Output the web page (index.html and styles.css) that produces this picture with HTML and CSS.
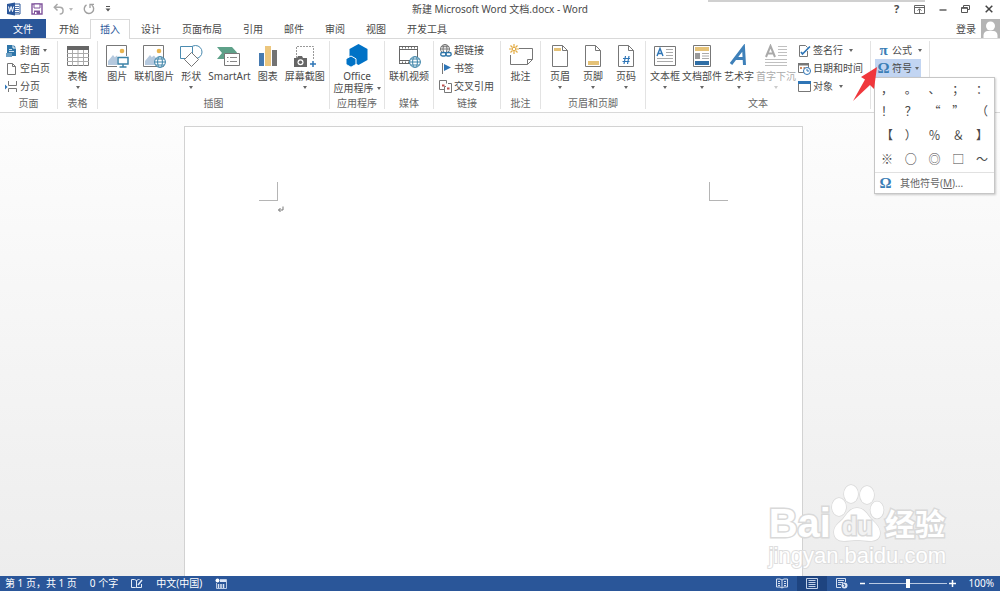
FILE: index.html
```html
<!DOCTYPE html>
<html lang="zh-CN">
<head>
    <meta charset="UTF-8">
    <meta name="viewport" content="width=device-width, initial-scale=1.0">
    <title>新建 Microsoft Word 文档.docx - Word</title>
    <link rel="stylesheet" href="styles.css">
</head>
<body>
    <header class="title-bar">
        <div class="quick-access">
            <svg class="word-logo" width="14" height="14" viewBox="0 0 14 14"><path d="M7 2h6v10H7z" fill="#fff" stroke="#2b579a"/><path d="M8 4.5h4M8 6.5h4M8 8.5h4M8 10.5h4" stroke="#2b579a" stroke-width=".8"/><path d="M0 2l8-1.500v13L0 12z" fill="#2b579a"/><path d="M1.500 4.500l1.200 5 1.400-5 1.400 5 1.200-5" fill="none" stroke="#fff"/></svg>
            <button aria-label="保存"><svg width="12" height="12" viewBox="0 0 12 12"><path d="M1 1h10v10H1z" fill="#fff" stroke="#80549c" stroke-width="1.400"/><path d="M3 1h6v4H3z" fill="#fff" stroke="#80549c"/><path d="M3 7.500h6V11H3z" fill="#80549c"/><path d="M4 9h1.500v2H4z" fill="#fff"/></svg></button>
            <button class="undo" aria-label="撤消"><svg width="12" height="12" viewBox="0 0 12 12"><path d="M4.500 1L1.300 4.300l3.200 3.200M1.500 4.300h5.200a3.300 3.300 0 0 1 0 6.700" fill="none" stroke="#a9a9a9" stroke-width="1.500"/></svg><i class="caret pale"></i></button>
            <button aria-label="恢复"><svg width="12" height="12" viewBox="0 0 12 12"><path d="M3.500 1.800a4.700 4.700 0 1 0 5.200.2" fill="none" stroke="#a0a0a0" stroke-width="1.400"/><path d="M7 5V1.300h4" fill="none" stroke="#a0a0a0" stroke-width="1.300"/></svg></button>
            <button aria-label="自定义快速访问工具栏"><svg width="6" height="6" viewBox="0 0 6 6"><path d="M1 .5h4" stroke="#555"/><path d="M.5 2.500h5L3 5.500z" fill="#555"/></svg></button>
        </div>
        <h1 class="doc-title">新建 Microsoft Word 文档.docx - Word</h1>
        <div class="window-buttons">
            <button class="help">?</button>
            <button aria-label="功能区显示选项"><svg width="11" height="9" viewBox="0 0 11 9"><path d="M.5.5h10v8H.5zM.5 2.500h10M5.500 8V4M3.500 5.700l2-2 2 2" fill="none" stroke="#666"/></svg></button>
            <button aria-label="最小化"><svg width="8" height="8" viewBox="0 0 8 8"><path d="M.5 5h7" stroke="#555" stroke-width="1.400"/></svg></button>
            <button aria-label="向下还原"><svg width="9" height="8" viewBox="0 0 9 8"><path d="M2.500 2.500v-2h6v4h-2M.5 2.500h6v5h-6zM.5 3.300h6" fill="none" stroke="#555"/></svg></button>
            <button aria-label="关闭"><svg width="8" height="8" viewBox="0 0 8 8"><path d="M.7.7l6.600 6.600M7.300.7L.7 7.300" stroke="#444" stroke-width="1.500"/></svg></button>
        </div>
        <span class="window-edge"></span>
    </header>

    <nav class="tabs">
        <button class="tab file">文件</button>
        <button class="tab">开始</button>
        <button class="tab active">插入</button>
        <button class="tab">设计</button>
        <button class="tab">页面布局</button>
        <button class="tab">引用</button>
        <button class="tab">邮件</button>
        <button class="tab">审阅</button>
        <button class="tab">视图</button>
        <button class="tab">开发工具</button>
        <div class="account">
            <a href="#">登录</a>
            <svg width="19" height="19" viewBox="0 0 19 19"><path d="M0 0h19v19H0z" fill="#b4b4b4"/><circle cx="9.500" cy="7" r="4.500" fill="#fff"/><path d="M2.500 19v-2.500c0-3 2-4.500 4-4.500h6c2 0 4 1.500 4 4.500V19z" fill="#fff"/></svg>
        </div>
    </nav>

    <section class="ribbon">
        <div class="group g-page">
            <div class="stack">
                <button class="small"><svg width="13" height="13" viewBox="0 0 13 13"><path d="M2 1h6.500L11 3.500V12H2z" fill="#2e75a8"/><path d="M8 1v3h3" fill="none" stroke="#fff"/><path d="M4 5.500h3M4 7.500h5" stroke="#cfe2f0"/><path d="M1 9h6v4H1z" fill="#6da0c4"/></svg>封面<i class="caret"></i></button>
                <button class="small"><svg width="13" height="13" viewBox="0 0 13 13"><path d="M2.500 1.500h5l3 3v8h-8zM7.500 1.500v3h3" fill="#fff" stroke="#777"/></svg>空白页</button>
                <button class="small"><svg width="13" height="13" viewBox="0 0 13 13"><path d="M3.500 1v4.500h8V1M3.500 12V8.500h8V12" fill="none" stroke="#777"/><path d="M0 4.500L2.500 7 0 9.500z" fill="#2e75b6"/></svg>分页</button>
            </div>
            <span class="group-name">页面</span>
        </div>

        <div class="group g-table">
            <div class="items">
                <button class="large"><svg width="24" height="24" viewBox="0 0 24 24"><path d="M1.500 2.500h21v19h-21z" fill="#fff" stroke="#777"/><path d="M1 2h22v4H1z" fill="#666"/><path d="M1 9.500h22M1 13.500h22M1 17.500h22M6.500 6v16M12 6v16M17.500 6v16" stroke="#aaa"/></svg>表格<i class="caret"></i></button>
            </div>
            <span class="group-name">表格</span>
        </div>

        <div class="group g-art">
            <div class="items">
                <button class="large"><svg width="24" height="24" viewBox="0 0 24 24"><path d="M1.500 1.500h20v21h-20z" fill="#fff" stroke="#777"/><circle cx="17" cy="7" r="2.300" fill="#e8b44f"/><path d="M3 21v-4l5-6 4 5v5zM10 13l2-1.500 2 2.500v7h-4z" fill="#b5c9de"/><path d="M12 12h12v11H12z" fill="#fff"/><path d="M13 13.500h10v6.500H13z" fill="#fff" stroke="#3c83a8" stroke-width="1.500"/><path d="M18 20v3M14.500 23h7" stroke="#3c83a8" stroke-width="1.500"/></svg>图片</button>
                <button class="large"><svg width="24" height="24" viewBox="0 0 24 24"><path d="M1.500 1.500h20v21h-20z" fill="#fff" stroke="#777"/><circle cx="17" cy="7" r="2.300" fill="#e8b44f"/><path d="M3 21v-4l5-6 4 5v5zM10 13l2-1.500 2 2.500v7h-4z" fill="#b5c9de"/><g fill="#fff" stroke="#3c83a8"><circle cx="18" cy="18" r="5.400"/><ellipse cx="18" cy="18" rx="2.400" ry="5.400"/><path d="M12.500 18h11M13.500 15h9M13.500 21h9"/></g></svg>联机图片</button>
                <button class="large"><svg width="24" height="24" viewBox="0 0 24 24"><circle cx="16.500" cy="8" r="6.500" fill="#fff" stroke="#4b8bb0"/><path d="M1.500 2.500h12v12h-12z" fill="#fff" stroke="#4b8bb0"/><path d="M12.500 8.500l7 7-7 7-7-7z" fill="#fff" stroke="#777"/></svg>形状<i class="caret"></i></button>
                <button class="large"><svg width="24" height="24" viewBox="0 0 24 24"><path d="M0 3h15l5 5.500L15 15H0l5-6z" fill="#5ea189"/><path d="M7.500 9.500h15v12h-15z" fill="#fff" stroke="#777"/><path d="M10 13.500h1.500M13 13.500h7M10 17.500h1.500M13 17.500h7" stroke="#888"/></svg>SmartArt</button>
                <button class="large"><svg width="24" height="24" viewBox="0 0 24 24"><path d="M3 9h5v13H3z" fill="#467ab0"/><path d="M9 2h6v20H9z" fill="#ecc67d"/><path d="M16 6h5v16h-5z" fill="#737373"/></svg>图表</button>
                <button class="large"><svg width="24" height="24" viewBox="0 0 24 24"><path d="M3.500 14V2.500h17V16" fill="none" stroke="#999" stroke-dasharray="2 1"/><path d="M1 14h3l1-2h4l1 2h4v9H1z" fill="#666"/><circle cx="7.500" cy="18.300" r="3" fill="#fff"/><circle cx="7.500" cy="18.300" r="1.700" fill="#666"/><path d="M20 17v6M17 20h6" stroke="#2e75b6" stroke-width="1.500"/></svg>屏幕截图<i class="caret"></i></button>
            </div>
            <span class="group-name">插图</span>
        </div>

        <div class="group g-apps">
            <div class="items">
                <button class="large"><svg width="24" height="24" viewBox="0 0 24 24"><path d="M13.500 0l9 5v11l-9 5-9-5V5z" fill="#0072c6"/><path d="M6 12l5 2.800v5.600L6 23.200l-5-2.800v-5.600z" fill="#0072c6" stroke="#fff"/></svg>Office<span class="second-line">应用程序<i class="caret"></i></span></button>
            </div>
            <span class="group-name">应用程序</span>
        </div>

        <div class="group g-media">
            <div class="items">
                <button class="large"><svg width="24" height="24" viewBox="0 0 24 24"><path d="M2.500 2v18M20.500 2v18M2 5.500h19M2 16.500h19" fill="none" stroke="#666"/><path d="M2 3.500h19M2 18.500h19" stroke="#777" stroke-width="2" stroke-dasharray="1 2"/><path d="M2 2.500h19M2 19.500h19" stroke="#666"/><g fill="#fff" stroke="#3c83a8"><circle cx="18" cy="18" r="5.400"/><ellipse cx="18" cy="18" rx="2.400" ry="5.400"/><path d="M12.500 18h11M13.500 15h9M13.500 21h9"/></g></svg>联机视频</button>
            </div>
            <span class="group-name">媒体</span>
        </div>

        <div class="group g-links">
            <div class="stack">
                <button class="small"><svg width="13" height="13" viewBox="0 0 13 13"><g fill="none" stroke="#777"><circle cx="6" cy="5" r="4.500"/><ellipse cx="6" cy="5" rx="2" ry="4.500"/><path d="M1.500 5h9M2 2.700h8"/></g><path d="M1 8h12v5H1z" fill="#fff"/><rect x="1.700" y="8.500" width="5.500" height="3.500" rx="1.700" fill="none" stroke="#2e75a8" stroke-width="1.400"/><rect x="6.700" y="8.500" width="5.500" height="3.500" rx="1.700" fill="none" stroke="#2e75a8" stroke-width="1.400"/></svg>超链接</button>
                <button class="small"><svg width="13" height="13" viewBox="0 0 13 13"><path d="M3.500 1v11" stroke="#777"/><path d="M5 2l7 3.500L5 9z" fill="#2e75b6"/></svg>书签</button>
                <button class="small"><svg width="13" height="13" viewBox="0 0 13 13"><path d="M5.500 9.500h-5v-9h7v3M9 3.500h3.500v9h-7v-6H7" fill="none" stroke="#777"/><path d="M3 5.500h2.500M8 8.500h2.500" stroke="#c0504d" stroke-width="1.800"/></svg>交叉引用</button>
            </div>
            <span class="group-name">链接</span>
        </div>

        <div class="group g-comment">
            <div class="items">
                <button class="large"><svg width="24" height="24" viewBox="0 0 24 24"><path d="M10 4.500h13.500v11l-5 5H1.500V11M23.500 15.500h-5v5" fill="none" stroke="#777"/><path d="M5 0v3M5 7v3M0 5h3M7 5h3M1.500 1.500l2 2M6.500 6.500l2 2M8.500 1.500l-2 2M3.500 6.500l-2 2" stroke="#e3ac45" stroke-width="1.200"/><circle cx="5" cy="5" r="1.700" fill="#fff" stroke="#e3ac45"/></svg>批注</button>
            </div>
            <span class="group-name">批注</span>
        </div>

        <div class="group g-header">
            <div class="items">
                <button class="large"><svg width="24" height="24" viewBox="0 0 24 24"><path d="M4.500 1.500h10l5 5v16h-15zM14.500 1.500v5h5" fill="#fff" stroke="#777"/><path d="M6 4h7v3H6z" fill="#e5c277"/></svg>页眉<i class="caret"></i></button>
                <button class="large"><svg width="24" height="24" viewBox="0 0 24 24"><path d="M4.500 1.500h10l5 5v16h-15zM14.500 1.500v5h5" fill="#fff" stroke="#777"/><path d="M7 17h11v4H7z" fill="#e5c277"/></svg>页脚<i class="caret"></i></button>
                <button class="large"><svg width="24" height="24" viewBox="0 0 24 24"><path d="M4.500 1.500h10l5 5v16h-15zM14.500 1.500v5h5" fill="#fff" stroke="#777"/><path d="M11.500 12l-1.500 8M15 12l-1.500 8M9 14.500h7M8.500 17.500h7" stroke="#2e75b6" stroke-width="1.200"/></svg>页码<i class="caret"></i></button>
            </div>
            <span class="group-name">页眉和页脚</span>
        </div>

        <div class="group g-text">
            <div class="items">
                <button class="large"><svg width="24" height="24" viewBox="0 0 24 24"><path d="M1.500 2.500h21v19h-21z" fill="#fff" stroke="#777"/><path d="M4 12l3-7.500 3 7.500M5 9.500h4" fill="none" stroke="#2e75b6" stroke-width="1.400"/><path d="M13 5.500h7M13 8.500h7M13 11.500h7M4 14.500h16M4 17.500h16" stroke="#aaa"/></svg>文本框<i class="caret"></i></button>
                <button class="large"><svg width="24" height="24" viewBox="0 0 24 24"><path d="M3.500 1.500h17v21h-17z" fill="#fff" stroke="#777"/><path d="M5 3h14v4H5z" fill="#e5c277"/><path d="M5 9h5v6H5z" fill="#999"/><path d="M12 9.500h7M12 12h7M12 14.500h7" stroke="#aaa"/><path d="M5 17h14v4H5z" fill="#2f6ea5"/></svg>文档部件<i class="caret"></i></button>
                <button class="large"><svg width="24" height="24" viewBox="0 0 24 24"><path d="M4 20L16.500 3.500 17.500 21M8 14.500h9" fill="none" stroke="#3e80b9" stroke-width="3"/></svg>艺术字<i class="caret"></i></button>
                <button class="large" disabled><svg width="24" height="24" viewBox="0 0 24 24"><path d="M2 13l4.500-11L11 13M3.500 9.500h6" fill="none" stroke="#aaa" stroke-width="2"/><path d="M14 2.500h9M14 5.500h9M14 8.500h9M14 11.500h9M1 15.500h22M1 18.500h22M1 21.500h22" stroke="#c0c0c0"/></svg>首字下沉<i class="caret"></i></button>
                <div class="stack">
                    <button class="small spaced"><svg width="13" height="13" viewBox="0 0 13 13"><path d="M9.500 7v5.500h-8v-11h6l2 2" fill="none" stroke="#777"/><path d="M3 8l1.500 2L12 2.500" fill="none" stroke="#2e75b6" stroke-width="1.700"/></svg>签名行<i class="caret"></i></button>
                    <button class="small"><svg width="13" height="13" viewBox="0 0 13 13"><path d="M.5 1.500h10v9H.5z" fill="#fff" stroke="#777"/><path d="M0 1h11v2.500H0z" fill="#777"/><path d="M2 5h2v2H2zM5.500 5h2v2h-2z" fill="#d38a5c"/><circle cx="9" cy="9" r="3.500" fill="#fff" stroke="#2e75b6"/><path d="M9 7v2h2" fill="none" stroke="#2e75b6"/></svg>日期和时间</button>
                    <button class="small spaced"><svg width="13" height="13" viewBox="0 0 13 13"><path d="M.5 1.500h12v10H.5z" fill="#fff" stroke="#777"/><path d="M0 1h13v3H0z" fill="#2e75b6"/></svg>对象<i class="caret"></i></button>
                </div>
            </div>
            <span class="group-name">文本</span>
        </div>

        <div class="group g-symbol">
            <div class="stack">
                <button class="small spaced"><span class="greek">π</span>公式<i class="caret"></i></button>
                <div class="symbol-picker">
                    <button class="small open"><span class="greek">Ω</span>符号<i class="caret"></i></button>
                    <div class="symbol-menu">
                        <div class="symbol-grid">
                            <button>，</button><button>。</button><button>、</button><button>；</button><button>：</button>
                            <button>！</button><button>？</button><button>“</button><button>”</button><button>（</button>
                            <button>【</button><button>）</button><button>％</button><button>＆</button><button>】</button>
                            <button>※</button><button class="ring">○</button><button>◎</button><button>□</button><button>～</button>
                        </div>
                        <button class="more-symbols"><span class="greek">Ω</span><span>其他符号(<u>M</u>)...</span></button>
                    </div>
                    <svg class="pointer" width="26" height="36" viewBox="0 0 26 36"><path d="M25 1L9 11l4 2.500L1 35l17-16 4 4z" fill="#f0373c"/></svg>
                </div>
            </div>
        </div>
    </section>

    <main class="workspace">
        <article class="page">
            <div class="margin-marks">
                <span class="mark left"></span>
                <span class="mark right"></span>
            </div>
            <p class="paragraph"><svg width="7" height="7" viewBox="0 0 7 7"><path d="M6 .5v3.500H1.500M3.500 2L1.500 4l2 2" fill="none" stroke="#777"/></svg></p>
        </article>
        <div class="watermark">
            <div class="watermark-logo">
                <span class="latin">Bai</span>
                <span class="paw">
                    <svg width="54" height="60" viewBox="0 0 54 60"><g fill="#fff" stroke="#d9d9d9" stroke-width="1.500"><ellipse cx="8" cy="24" rx="7" ry="9"/><ellipse cx="20" cy="11" rx="7" ry="9"/><ellipse cx="36" cy="12" rx="7" ry="9"/><ellipse cx="46" cy="27" rx="6.500" ry="8.500"/><path d="M26 25c7 0 10 6 14 11 4 4 9 8 9 14 0 6-5 8-10 8-5 0-8-1-13-1s-8 1-13 1c-6 0-10-3-10-9 0-6 5-9 9-13 4-5 7-11 14-11z"/></g></svg>
                    <b>du</b>
                </span>
                <span class="hanzi">经验</span>
            </div>
            <div class="watermark-url">jingyan.baidu.com</div>
        </div>
    </main>

    <footer class="status-bar">
        <span class="pages">第 1 页，共 1 页</span>
        <span>0 个字</span>
        <svg width="12" height="11" viewBox="0 0 12 11"><path d="M5.500 9.500v-7l-2-1h-3v8h4zM5.500 9.500h5V6M5.500 2.500l2-1h1" fill="none" stroke="#e3ebf7"/><path d="M7 7l4-5" stroke="#e3ebf7" stroke-width="1.500"/></svg>
        <span>中文(中国)</span>
        <svg width="12" height="11" viewBox="0 0 12 11"><path d="M5 1.500h6.500v9h-10V5" fill="none" stroke="#b9c9e3"/><path d="M5 2h6v2H5z" fill="#dce6f5"/><path d="M3.500 6v4M6 6v4M8.500 6v4" stroke="#dce6f5" stroke-width="1.500"/><circle cx="2.500" cy="2.500" r="2" fill="#fff"/></svg>
        <div class="view-tools">
            <button aria-label="阅读视图"><svg width="12" height="11" viewBox="0 0 12 11"><path d="M6 2L4 1H.5v8H4l2 1 2-1h3.500V1H8zM6 2v8M2 3.500h2M2 5.500h2M2 7.500h2M8 3.500h2M8 5.500h2M8 7.500h2" fill="none" stroke="#d4dff0"/></svg></button>
            <button class="current" aria-label="页面视图"><svg width="12" height="11" viewBox="0 0 12 11"><path d="M.5.5h11v10H.5zM2.500 2.500h7M2.500 4.500h7M2.500 6.500h7M2.500 8.500h7" fill="none" stroke="#c3d1e8"/></svg></button>
            <button aria-label="Web 版式视图"><svg width="12" height="11" viewBox="0 0 12 11"><path d="M9.500 4V.5h-9v9H5M2 2.500h6M2 4.500h5M2 6.500h3" fill="none" stroke="#d4dff0"/><circle cx="8.500" cy="7.500" r="3" fill="#dbe5f4"/><path d="M7 6l2 1-1 2" fill="none" stroke="#2a5699"/></svg></button>
            <button class="zoom-step" aria-label="缩小"><svg width="7" height="7" viewBox="0 0 7 7"><path d="M1 3.500h5" stroke="#fff" stroke-width="1.500"/></svg></button>
            <input class="zoom" type="range" min="0" max="200" value="100" aria-label="显示比例">
            <button class="zoom-step" aria-label="放大"><svg width="7" height="7" viewBox="0 0 7 7"><path d="M0 3.500h7M3.500 0v7" stroke="#fff" stroke-width="1.500"/></svg></button>
            <span class="zoom-value">100%</span>
        </div>
    </footer>
</body>
</html>
```
FILE: styles.css
```css
:root {
    --blue: #2a5699;
    --text: #4a4a4a;
    --line: #d9d9d9;
    --icon-blue: #3a7db5;
}

* {
    box-sizing: border-box;
}

body {
    margin: 0;
    min-height: 100vh;
    display: flex;
    flex-direction: column;
    background: #fff;
    color: var(--text);
    font-family: "Noto Sans", "Noto Sans CJK SC", sans-serif;
    font-size: 10px;
    line-height: 14px;
}

button {
    font: inherit;
    color: inherit;
    background: none;
    border: 0;
    padding: 0;
    white-space: nowrap;
}

svg {
    display: block;
    flex: none;
}

.caret {
    flex: none;
    border: 2px solid transparent;
    border-top: 3px solid #666;
    border-bottom: 0;
}

.caret.pale {
    border-top-color: #bbb;
}

/* title bar */
.title-bar {
    position: relative;
    display: grid;
    grid-template-columns: 1fr auto 1fr;
    align-items: center;
    height: 18px;
}

.quick-access {
    display: flex;
    align-items: center;
    gap: 10px;
    padding-left: 7px;
}

.quick-access button {
    display: flex;
    align-items: center;
    gap: 4px;
}

.doc-title {
    margin: 0;
    font-size: 10px;
    font-weight: normal;
}

.window-buttons {
    display: flex;
    justify-content: flex-end;
}

.window-buttons button {
    width: 23px;
    height: 18px;
    display: flex;
    align-items: center;
    justify-content: center;
}

.window-buttons .help {
    font-size: 11px;
    font-weight: bold;
}

.window-edge {
    position: absolute;
    top: 0;
    right: 75px;
    width: 217px;
    height: 2px;
    background: #d0d0d0;
}

/* tabs */
.tabs {
    display: flex;
    gap: 1px;
    height: 21px;
    padding-top: 1px;
    border-bottom: 1px solid var(--line);
}

.tab {
    height: 19px;
    padding: 0 10px;
}

.tab.file {
    width: 46px;
    margin-right: 2px;
    background: var(--blue);
    color: #fff;
}

.tab.active {
    height: 20px;
    padding: 0 9px 2px;
    background: #fff;
    color: var(--blue);
    border: 1px solid var(--line);
    border-bottom: 0;
}

.account {
    display: flex;
    align-items: center;
    gap: 5px;
    margin-left: auto;
}

.account a {
    color: inherit;
    text-decoration: none;
}

/* ribbon */
.ribbon {
    display: grid;
    grid-template-columns: 58px 40px 232px 55px 49px 67px 40px 105px 225px 59px;
    height: 74px;
    border-bottom: 1px solid var(--line);
}

.group {
    display: flex;
    flex-direction: column;
    justify-content: space-between;
    margin: 2px 0 3px;
    border-right: 1px solid #e3e3e3;
}

.group-name {
    line-height: 12px;
    text-align: center;
    color: #666;
}

.items {
    display: flex;
    justify-content: center;
}

.g-art .items {
    gap: 5px;
    padding-left: 3px;
}

.g-header .items {
    gap: 9px;
}

.g-text .items {
    gap: 2px;
    padding-right: 3px;
}

.large {
    display: flex;
    flex-direction: column;
    align-items: center;
    padding-top: 3px;
}

.large svg {
    margin-bottom: 1px;
}

.large > .caret {
    margin-top: 3px;
}

.large:disabled {
    color: #aaa;
}

.large:disabled .caret {
    border-top-color: #ccc;
}

.second-line {
    display: flex;
    align-items: center;
    gap: 3px;
    line-height: 10px;
}

.stack {
    display: flex;
    flex-direction: column;
    align-items: flex-start;
}

.small {
    display: flex;
    align-items: center;
    gap: 2px;
    height: 18px;
}

.small .caret {
    margin-left: 1px;
}

.small.spaced .caret {
    margin-left: 4px;
}

.g-page .stack,
.g-links .stack {
    padding-left: 5px;
}

.g-symbol .stack {
    padding-left: 4px;
}

.g-symbol .small {
    padding: 0 2px;
}

.greek {
    width: 13px;
    font-family: "Liberation Serif", serif;
    font-size: 15px;
    font-weight: bold;
    text-align: center;
    color: var(--icon-blue);
}

/* symbol drop-down */
.symbol-picker {
    position: relative;
}

.symbol-picker .open {
    background: #c2d5f2;
}

.symbol-menu {
    position: absolute;
    z-index: 2;
    top: 18px;
    left: -1px;
    width: 121px;
    background: #fff;
    border: 1px solid #c6c6c6;
    box-shadow: 1px 1px 2px rgba(0, 0, 0, 0.2);
}

.symbol-grid {
    display: grid;
    grid-template-columns: repeat(5, 1fr);
    grid-template-rows: 20px repeat(3, 24px);
    padding: 1px 0;
    border-bottom: 1px solid #e1e1e1;
}

.symbol-grid button {
    font-family: "Noto Sans CJK SC", sans-serif;
    font-size: 12px;
}

.symbol-grid .ring {
    font-weight: bold;
}

.more-symbols {
    display: flex;
    align-items: center;
    gap: 8px;
    height: 20px;
    padding-left: 4px;
    color: #666;
}

.pointer {
    position: absolute;
    z-index: 3;
    top: 7px;
    left: -23px;
}

/* document */
.workspace {
    position: relative;
    flex: 1;
    display: flex;
    justify-content: center;
    padding: 13px 14px 0 0;
    background: linear-gradient(#fdfdfd, #ededed);
}

.page {
    width: 619px;
    max-width: 90%;
    padding: 55px 74px 0;
    background: #fff;
    border: 1px solid #d2d2d2;
    border-bottom: 0;
}

.margin-marks {
    display: flex;
    justify-content: space-between;
}

.mark {
    width: 19px;
    height: 19px;
    border-bottom: 1px solid #b5b5b5;
}

.mark.left {
    border-right: 1px solid #b5b5b5;
}

.mark.right {
    border-left: 1px solid #b5b5b5;
}

.paragraph {
    margin: 5px 18px;
}

/* watermark */
.watermark {
    position: absolute;
    right: 54px;
    bottom: 7px;
    color: #fff;
    font-family: "Liberation Sans", "Noto Sans CJK SC", sans-serif;
    white-space: nowrap;
    -webkit-text-stroke: 3px #d9d9d9;
    paint-order: stroke fill;
}

.watermark-logo {
    display: flex;
    align-items: flex-end;
    height: 60px;
    font-weight: bold;
}

.latin {
    font-size: 40px;
    line-height: 40px;
}

.paw {
    position: relative;
}

.paw b {
    position: absolute;
    left: 11px;
    bottom: 4px;
    font-size: 25px;
    line-height: 26px;
    color: #f2f2f2;
}

.hanzi {
    font-size: 30px;
    line-height: 36px;
}

.watermark-url {
    font-size: 22px;
    line-height: 26px;
    -webkit-text-stroke: 2px #dedede;
}

/* status bar */
.status-bar {
    display: flex;
    align-items: center;
    gap: 13px;
    height: 15px;
    padding: 0 6px 0 5px;
    background: var(--blue);
    color: #fff;
    line-height: 15px;
}

.view-tools {
    display: flex;
    align-items: center;
    margin-left: auto;
}

.view-tools button {
    display: flex;
    align-items: center;
    justify-content: center;
    width: 30px;
    height: 15px;
}

.view-tools .current {
    background: #1e4480;
}

.view-tools .zoom-step {
    width: 12px;
}

.zoom {
    appearance: none;
    width: 78px;
    height: 15px;
    margin: 0;
    background: linear-gradient(#b9c9e3, #b9c9e3) center / 100% 1px no-repeat;
}

.zoom::-webkit-slider-thumb {
    appearance: none;
    width: 4px;
    height: 9px;
    background: #fff;
}

.zoom-value {
    margin-left: 10px;
}
```
